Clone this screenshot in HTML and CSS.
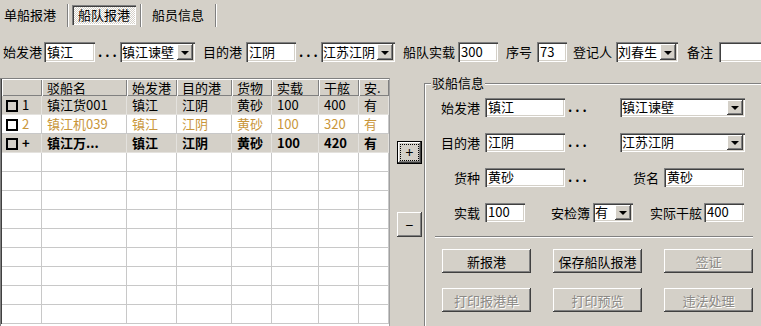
FILE: index.html
```html
<!DOCTYPE html>
<html lang="zh-CN">
<head>
  <meta charset="UTF-8" />
  <title>船队报港</title>
  <link rel="stylesheet" href="styles.css">
</head>
<body>
  <div id="tabs">
    <div class="tab first">单船报港</div>
    <div class="tab-sep"></div>
    <div class="tab active">船队报港</div>
    <div class="tab-sep near"></div>
    <div class="tab">船员信息</div>
    <div class="tab-sep"></div>
  </div>

  <div id="filters">
    <span class="lbl ml3">始发港</span>
    <span class="field w51 ml2">镇江</span>
    <span class="dots w25">...</span>
    <span class="combo w75"><span>镇江谏壁</span><i class="drop"></i></span>
    <span class="lbl ml8">目的港</span>
    <span class="field w50 ml4">江阴</span>
    <span class="dots w25">...</span>
    <span class="combo w74"><span>江苏江阴</span><i class="drop"></i></span>
    <span class="lbl ml8">船队实载</span>
    <span class="field w40 ml3">300</span>
    <span class="lbl ml8">序号</span>
    <span class="field w30 ml5">73</span>
    <span class="lbl ml6">登记人</span>
    <span class="combo w62 ml4"><span>刘春生</span><i class="drop"></i></span>
    <span class="lbl ml9">备注</span>
    <span class="field w60 ml6"></span>
  </div>

  <div id="main">
    <div id="grid">
      <table>
        <thead>
          <tr>
            <th class="c0"></th><th class="c1">驳船名</th><th class="c2">始发港</th><th class="c3">目的港</th>
            <th class="c4">货物</th><th class="c5">实载</th><th class="c6">干舷</th><th class="c7">安.</th>
          </tr>
        </thead>
        <tbody>
          <tr class="gray">
            <td class="rh"><b class="chk"></b>1</td><td>镇江货001</td><td>镇江</td><td>江阴</td><td>黄砂</td><td>100</td><td>400</td><td>有</td>
          </tr>
          <tr class="edit">
            <td class="rh"><b class="chk"></b>2</td><td>镇江机039</td><td>镇江</td><td>江阴</td><td>黄砂</td><td>100</td><td>320</td><td>有</td>
          </tr>
          <tr class="gray new">
            <td class="rh"><b class="chk"></b>+</td><td>镇江万...</td><td>镇江</td><td>江阴</td><td>黄砂</td><td>100</td><td>420</td><td>有</td>
          </tr>
          <tr><td></td><td></td><td></td><td></td><td></td><td></td><td></td><td></td></tr>
          <tr><td></td><td></td><td></td><td></td><td></td><td></td><td></td><td></td></tr>
          <tr><td></td><td></td><td></td><td></td><td></td><td></td><td></td><td></td></tr>
          <tr><td></td><td></td><td></td><td></td><td></td><td></td><td></td><td></td></tr>
          <tr><td></td><td></td><td></td><td></td><td></td><td></td><td></td><td></td></tr>
          <tr><td></td><td></td><td></td><td></td><td></td><td></td><td></td><td></td></tr>
          <tr><td></td><td></td><td></td><td></td><td></td><td></td><td></td><td></td></tr>
          <tr><td></td><td></td><td></td><td></td><td></td><td></td><td></td><td></td></tr>
          <tr><td></td><td></td><td></td><td></td><td></td><td></td><td></td><td></td></tr>
        </tbody>
      </table>
    </div>

    <div id="side">
      <button class="btn small focus"><span>+</span></button>
      <button class="btn small minus">−</button>
    </div>

    <fieldset id="detail">
      <legend>驳船信息</legend>
      <div class="rows">
        <div class="drow">
          <span class="dl">始发港</span>
          <span class="field w80 ml5">镇江</span>
          <span class="dots w55">...</span>
          <span class="combo w125"><span>镇江谏壁</span><i class="drop"></i></span>
        </div>
        <div class="drow">
          <span class="dl">目的港</span>
          <span class="field w80 ml5">江阴</span>
          <span class="dots w55">...</span>
          <span class="combo w125"><span>江苏江阴</span><i class="drop"></i></span>
        </div>
        <div class="drow">
          <span class="dl">货种</span>
          <span class="field w80 ml5">黄砂</span>
          <span class="dots w55">...</span>
          <span class="dl w39">货名</span>
          <span class="field w80 ml5">黄砂</span>
        </div>
        <div class="drow">
          <span class="dl">实载</span>
          <span class="field w40 ml5">100</span>
          <span class="dl w65">安检簿</span>
          <span class="combo w40 ml3"><span>有</span><i class="drop"></i></span>
          <span class="dl w69">实际干舷</span>
          <span class="field w40 ml2">400</span>
        </div>
      </div>
      <div class="hr"></div>
      <div class="btns">
        <button class="btn">新报港</button>
        <button class="btn">保存船队报港</button>
        <button class="btn" disabled>签证</button>
        <button class="btn" disabled>打印报港单</button>
        <button class="btn" disabled>打印预览</button>
        <button class="btn" disabled>违法处理</button>
      </div>
    </fieldset>
  </div>
</body>
</html>
```

FILE: styles.css
```css
body {
  margin: 0;
  width: 761px;
  height: 326px;
  overflow: hidden;
  background: #d4d0c8;
  color: #000;
  font-family: "Noto Sans CJK SC", "Liberation Sans", sans-serif;
  font-size: 13px;
}

/* tab strip */
#tabs {
  display: flex;
  align-items: center;
  height: 30px;
}
.tab {
  line-height: 20px;
  white-space: nowrap;
  margin-left: 10px;
}
.tab.first { margin-left: 4px; }
.tab.active {
  margin-left: 3px;
  padding: 0 6px;
  height: 20px;
  box-shadow: inset 1px 1px #808080, inset 2px 2px #404040, inset -1px -1px #fff;
  background: repeating-conic-gradient(#fff 0 25%, #d4d0c8 0 50%) 0 0 / 2px 2px;
}
.tab-sep {
  height: 23px;
  margin-left: 11px;
  border-left: 1px solid #808080;
  border-right: 1px solid #fff;
}
.tab-sep.near { margin-left: 4px; }

/* filter row */
#filters {
  display: flex;
  align-items: center;
  margin-top: 12px;
  height: 20px;
  white-space: nowrap;
}
.lbl { line-height: 20px; }

.dl {
  width: 55px;
  text-align: right;
  flex-shrink: 0;
}

.field, .combo {
  display: inline-flex;
  align-items: center;
  box-sizing: border-box;
  height: 20px;
  padding: 2px 2px 2px 3px;
  background: #fff;
  box-shadow: inset 1px 1px #808080, inset 2px 2px #404040, inset -1px -1px #fff, inset -2px -2px #d4d0c8;
  white-space: nowrap;
  line-height: 16px;
  flex-shrink: 0;
}
.combo {
  padding-left: 2px;
  justify-content: space-between;
}
.combo span { flex: 1; white-space: nowrap; }
.drop {
  display: flex;
  align-items: center;
  justify-content: center;
  flex-shrink: 0;
  box-sizing: border-box;
  width: 16px;
  height: 100%;
  background: #d4d0c8;
  box-shadow: inset -1px -1px #404040, inset 1px 1px #fff, inset -2px -2px #808080;
}
.drop::after {
  content: "";
  border-left: 4px solid transparent;
  border-right: 4px solid transparent;
  border-top: 4px solid #000;
  margin-top: 1px;
}
.dots {
  box-sizing: border-box;
  padding-left: 3px;
  font-weight: bold;
  letter-spacing: 3px;
  line-height: 20px;
  flex-shrink: 0;
}

.w25 { width: 25px; }
.w30 { width: 30px; }
.w39 { width: 39px; }
.w40 { width: 40px; }
.w50 { width: 50px; }
.w51 { width: 51px; }
.w55 { width: 55px; }
.w60 { width: 60px; }
.w62 { width: 62px; }
.w65 { width: 65px; }
.w69 { width: 69px; }
.w74 { width: 74px; }
.w75 { width: 75px; }
.w80 { width: 80px; }
.w125 { width: 125px; }
.ml2 { margin-left: 2px; }
.ml3 { margin-left: 3px; }
.ml4 { margin-left: 4px; }
.ml5 { margin-left: 5px; }
.ml6 { margin-left: 6px; }
.ml8 { margin-left: 8px; }
.ml9 { margin-left: 9px; }

/* main area */
#main {
  display: flex;
  margin-top: 14px;
}

#grid {
  box-sizing: border-box;
  width: 390px;
  height: 260px;
  margin-top: 2px;
  overflow: hidden;
  background: #fff;
  border-top: 1px solid #808080;
  border-left: 1px solid #808080;
  border-right: 1px solid #a0a0a0;
  flex-shrink: 0;
}
#grid table {
  table-layout: fixed;
  border-collapse: separate;
  border-spacing: 0;
  width: 388px;
  border-left: 1px solid #404040;
}
#grid th, #grid td {
  box-sizing: border-box;
  padding: 0 0 0 5px;
  text-align: left;
  font-weight: normal;
  white-space: nowrap;
  overflow: hidden;
}
#grid th {
  height: 17px;
  line-height: 16px;
  background: #d4d0c8;
  box-shadow: inset 1px 1px #fff, inset -1px -1px #808080;
}
#grid td {
  height: 19px;
  line-height: 18px;
  border-right: 1px solid #c8c8c8;
  border-bottom: 1px solid #c8c8c8;
}
.c0 { width: 40px; }
.c1 { width: 85px; }
.c2 { width: 50px; }
.c3 { width: 55px; }
.c4 { width: 40px; }
.c5 { width: 47px; }
.c6 { width: 40px; }
.c7 { width: 30px; }

#grid tr.gray td { background: #d4d0c8; border-color: #e4e2de; }
#grid tr.edit td { color: #c9963a; }
#grid tr.new td { font-weight: bold; }
#grid td.rh { padding-left: 4px; }
.chk {
  display: inline-block;
  box-sizing: border-box;
  width: 12px;
  height: 12px;
  margin-right: 4px;
  border: 2px solid #000;
  vertical-align: -2px;
}

/* buttons */
.btn {
  box-sizing: border-box;
  height: 24px;
  padding: 0;
  border: none;
  background: #d4d0c8;
  color: #000;
  font-family: inherit;
  font-size: 13px;
  box-shadow: inset -1px -1px #404040, inset 1px 1px #fff, inset -2px -2px #808080;
}
.btn:disabled {
  color: #8c8a86;
  text-shadow: 1px 1px #fff;
}

#side {
  box-sizing: border-box;
  width: 34px;
  padding: 65px 0 0 7px;
  display: flex;
  flex-direction: column;
  flex-shrink: 0;
}
.btn.small {
  width: 25px;
  height: 23px;
  font-size: 14px;
  line-height: 1;
}
.btn.focus {
  border: 1px solid #000;
  display: flex;
  align-items: center;
  justify-content: center;
}
.btn.focus span {
  display: block;
  width: 17px;
  height: 15px;
  line-height: 14px;
  outline: 1px dotted #000;
}
.btn.minus {
  margin-top: 48px;
  height: 25px;
}

/* detail group */
#detail {
  box-sizing: border-box;
  width: 360px;
  height: 300px;
  margin: 0;
  padding: 8px 0 0 0;
  min-width: 0;
  border: 1px solid #808080;
  box-shadow: inset 1px 1px #fff;
  flex-shrink: 0;
}
#detail legend {
  margin-left: 6px;
  padding: 0 1px;
  line-height: 14px;
  background: #d4d0c8;
}
.rows {
  display: flex;
  flex-direction: column;
  gap: 17px;
}
.drow {
  display: flex;
  align-items: center;
  height: 18px;
  white-space: nowrap;
}
.drow .field, .drow .combo { height: 19px; }
.hr {
  width: 318px;
  margin: 15px 0 0 10px;
  border-top: 1px solid #808080;
  border-bottom: 1px solid #fff;
}
.btns {
  display: grid;
  grid-template-columns: repeat(3, 89px);
  column-gap: 22px;
  row-gap: 15px;
  margin: 11px 0 0 17px;
}
```
